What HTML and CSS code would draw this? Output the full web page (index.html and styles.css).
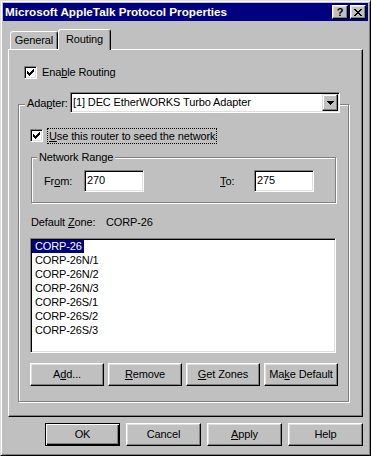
FILE: index.html
```html
<!DOCTYPE html>
<html>
<head>
<meta charset="utf-8">
<link rel="stylesheet" href="styles.css">
</head>
<body>
<div class="window">
  <div class="titlebar">
    <span class="title">Microsoft AppleTalk Protocol Properties</span>
    <div class="tbtns">
      <span class="tbtn help">?</span>
      <span class="tbtn close"><svg width="8" height="7" viewBox="0 0 8 7" shape-rendering="crispEdges"><path d="M0 0h2v1H0zM6 0h2v1H6zM1 1h2v1H1zM5 1h2v1H5zM2 2h4v1H2zM3 3h2v1H3zM2 4h4v1H2zM1 5h2v1H1zM5 5h2v1H5zM0 6h2v1H0zM6 6h2v1H6z"/></svg></span>
    </div>
  </div>
  <div class="client">
    <div class="tabs">
      <div class="tab general">General</div>
      <div class="tab active">Routing</div>
    </div>
    <div class="panel">
      <div class="check-row enable">
        <span class="cb"><svg width="7" height="7" viewBox="0 0 7 7" shape-rendering="crispEdges"><path d="M0 2h1v3H0zM1 3h1v3H1zM2 4h1v3H2zM3 3h1v3H3zM4 2h1v3H4zM5 1h1v3H5zM6 0h1v3H6z"/></svg></span>
        <span class="lbl">Ena<u>b</u>le Routing</span>
      </div>
      <div class="group adapter">
        <div class="group-head">
          <span class="adapter-lbl">Ada<u>p</u>ter:</span>
          <div class="combo">
            <span class="combo-text">[1] DEC EtherWORKS Turbo Adapter</span>
            <span class="combo-btn"><svg width="7" height="4" viewBox="0 0 7 4" shape-rendering="crispEdges"><path d="M0 0h7v1H0zM1 1h5v1H1zM2 2h3v1H2zM3 3h1v1H3z"/></svg></span>
          </div>
        </div>
        <div class="check-row seed">
          <span class="cb"><svg width="7" height="7" viewBox="0 0 7 7" shape-rendering="crispEdges"><path d="M0 2h1v3H0zM1 3h1v3H1zM2 4h1v3H2zM3 3h1v3H3zM4 2h1v3H4zM5 1h1v3H5zM6 0h1v3H6z"/></svg></span>
          <span class="lbl focus"><u>U</u>se this router to seed the network</span>
        </div>
        <div class="group range">
          <span class="group-title">Network Range</span>
          <div class="range-row">
            <span class="from-lbl">Fr<u>o</u>m:</span>
            <span class="edit">270</span>
            <span class="to-lbl"><u>T</u>o:</span>
            <span class="edit">275</span>
          </div>
        </div>
        <div class="zone-row">
          <span class="zone-lbl">Default <u>Z</u>one:</span>
          <span>CORP-26</span>
        </div>
        <div class="listbox">
          <div class="item"><span class="sel">CORP-26</span></div>
          <div class="item"><span>CORP-26N/1</span></div>
          <div class="item"><span>CORP-26N/2</span></div>
          <div class="item"><span>CORP-26N/3</span></div>
          <div class="item"><span>CORP-26S/1</span></div>
          <div class="item"><span>CORP-26S/2</span></div>
          <div class="item"><span>CORP-26S/3</span></div>
        </div>
        <div class="btn-row">
          <span class="btn">A<u>d</u>d...</span>
          <span class="btn"><u>R</u>emove</span>
          <span class="btn"><u>G</u>et Zones</span>
          <span class="btn">Ma<u>k</u>e Default</span>
        </div>
      </div>
    </div>
    <div class="dlg-btns">
      <span class="btn dlg default">OK</span>
      <span class="btn dlg">Cancel</span>
      <span class="btn dlg"><u>A</u>pply</span>
      <span class="btn dlg">Help</span>
    </div>
  </div>
</div>
</body>
</html>
```

FILE: styles.css
```css
html, body {
  margin: 0;
  padding: 0;
  background: #c0c0c0;
}

body {
  font-family: "Liberation Sans", Arial, sans-serif;
  font-size: 11px;
  letter-spacing: -0.12px;
  color: #000;
}

u {
  text-decoration: underline;
  text-underline-offset: 1px;
}

.window {
  width: 371px;
  height: 456px;
  box-sizing: border-box;
  border: 1px solid;
  border-color: #dfdfdf #000 #000 #dfdfdf;
  box-shadow: inset 1px 1px #fff, inset -1px -1px #808080;
  padding: 2px;
  background: #c0c0c0;
}

.titlebar {
  height: 18px;
  background: #000080;
  color: #fff;
  display: flex;
  align-items: center;
  justify-content: space-between;
  padding: 0 2px;
}

.title {
  font-weight: bold;
  font-size: 11.7px;
  letter-spacing: 0;
  line-height: 18px;
}

.tbtns {
  display: flex;
  gap: 2px;
}

.tbtn {
  width: 16px;
  height: 14px;
  box-sizing: border-box;
  border: 1px solid;
  border-color: #fff #000 #000 #fff;
  box-shadow: inset -1px -1px #808080, inset 1px 1px #dfdfdf;
  background: #c0c0c0;
  color: #000;
  display: flex;
  align-items: center;
  justify-content: center;
  font-weight: bold;
  font-size: 11px;
  line-height: 12px;
}

.client {
  padding: 0 5px;
}

.tabs {
  display: flex;
  align-items: flex-end;
  height: 20px;
  margin-top: 8px;
  padding-left: 2px;
}

.tab {
  box-sizing: border-box;
  height: 18px;
  border: 1px solid;
  border-bottom: none;
  border-color: #fff #000 transparent #fff;
  box-shadow: inset -1px 0 #808080;
  border-radius: 3px 3px 0 0;
  text-align: center;
  line-height: 17px;
  background: #c0c0c0;
}

.tab.general {
  width: 48px;
}

.tab.active {
  width: 53px;
  height: 21px;
  margin-bottom: -1px;
  position: relative;
  z-index: 1;
  line-height: 19px;
}

.panel {
  box-sizing: border-box;
  height: 368px;
  border: 1px solid;
  border-color: #fff #000 #000 #fff;
  box-shadow: inset -1px -1px #808080;
}

.check-row {
  display: flex;
  align-items: center;
  gap: 5px;
  height: 13px;
  line-height: 13px;
}

.cb {
  width: 13px;
  height: 13px;
  box-sizing: border-box;
  background: #fff;
  border: 1px solid;
  border-color: #808080 #fff #fff #808080;
  box-shadow: inset 1px 1px #000, inset -1px -1px #dfdfdf;
  display: flex;
  align-items: center;
  justify-content: center;
}

.enable {
  margin: 16px 0 0 15px;
}

.group {
  box-sizing: border-box;
  border: 1px solid #808080;
  box-shadow: inset 1px 1px #fff, 1px 1px #fff;
}

.adapter {
  margin: 25px 0 0 9px;
  width: 331px;
  height: 298px;
}

.group-head {
  display: flex;
  align-items: center;
  width: max-content;
  height: 21px;
  margin: -13px 0 0 6px;
  padding-left: 2px;
  background: #c0c0c0;
}

.adapter-lbl {
  width: 43px;
}

.combo {
  display: flex;
  box-sizing: border-box;
  width: 270px;
  height: 21px;
  background: #fff;
  border: 1px solid;
  border-color: #808080 #fff #fff #808080;
  box-shadow: inset 1px 1px #000, inset -1px -1px #dfdfdf;
  padding: 1px;
}

.combo-text {
  flex: 1;
  padding-left: 1px;
  line-height: 17px;
}

.combo-btn {
  width: 16px;
  height: 17px;
  box-sizing: border-box;
  border: 1px solid;
  border-color: #dfdfdf #000 #000 #dfdfdf;
  box-shadow: inset -1px -1px #808080, inset 1px 1px #fff;
  background: #c0c0c0;
  display: flex;
  align-items: center;
  justify-content: center;
}

.seed {
  margin: 16px 0 0 11px;
}

.focus {
  outline: 1px dotted #000;
  outline-offset: 0;
  padding: 0 1px;
  line-height: 14px;
}

.range {
  margin: 15px 0 0 12px;
  width: 305px;
  height: 46px;
}

.group-title {
  display: block;
  width: max-content;
  margin: -7px 0 0 5px;
  padding: 0 2px;
  background: #c0c0c0;
  line-height: 13px;
}

.range-row {
  display: flex;
  align-items: center;
  margin: 6px 0 0 12px;
  height: 22px;
}

.from-lbl {
  width: 40px;
}

.to-lbl {
  margin-left: 76px;
  width: 34px;
}

.edit {
  box-sizing: border-box;
  width: 60px;
  height: 22px;
  background: #fff;
  border: 1px solid;
  border-color: #808080 #fff #fff #808080;
  box-shadow: inset 1px 1px #000, inset -1px -1px #dfdfdf;
  padding-left: 2px;
  line-height: 19px;
}

.zone-row {
  display: flex;
  margin: 13px 0 0 12px;
  line-height: 13px;
}

.zone-lbl {
  width: 75px;
}

.listbox {
  box-sizing: border-box;
  margin: 9px 0 0 11px;
  width: 306px;
  height: 115px;
  background: #fff;
  border: 1px solid;
  border-color: #808080 #fff #fff #808080;
  box-shadow: inset 1px 1px #000, inset -1px -1px #dfdfdf;
  padding: 1px;
}

.item {
  height: 14px;
  line-height: 13px;
}

.item span {
  display: inline-block;
  padding: 0 2px 0 3px;
  height: 13px;
}

.item .sel {
  background: #000080;
  color: #fff;
}

.btn-row {
  display: flex;
  gap: 4px;
  margin: 10px 0 0 11px;
}

.btn {
  box-sizing: border-box;
  width: 74px;
  height: 23px;
  border: 1px solid;
  border-color: #fff #000 #000 #fff;
  box-shadow: inset -1px -1px #808080, inset 1px 1px #dfdfdf;
  background: #c0c0c0;
  display: flex;
  align-items: center;
  justify-content: center;
  line-height: 13px;
}

.dlg-btns {
  display: flex;
  justify-content: flex-end;
  gap: 6px;
  margin-top: 6px;
}

.btn.dlg {
  width: 75px;
}

.btn.default {
  border-color: #000;
  box-shadow: inset 1px 1px #fff, inset -1px -1px #000, inset -2px -2px #808080;
}
```
